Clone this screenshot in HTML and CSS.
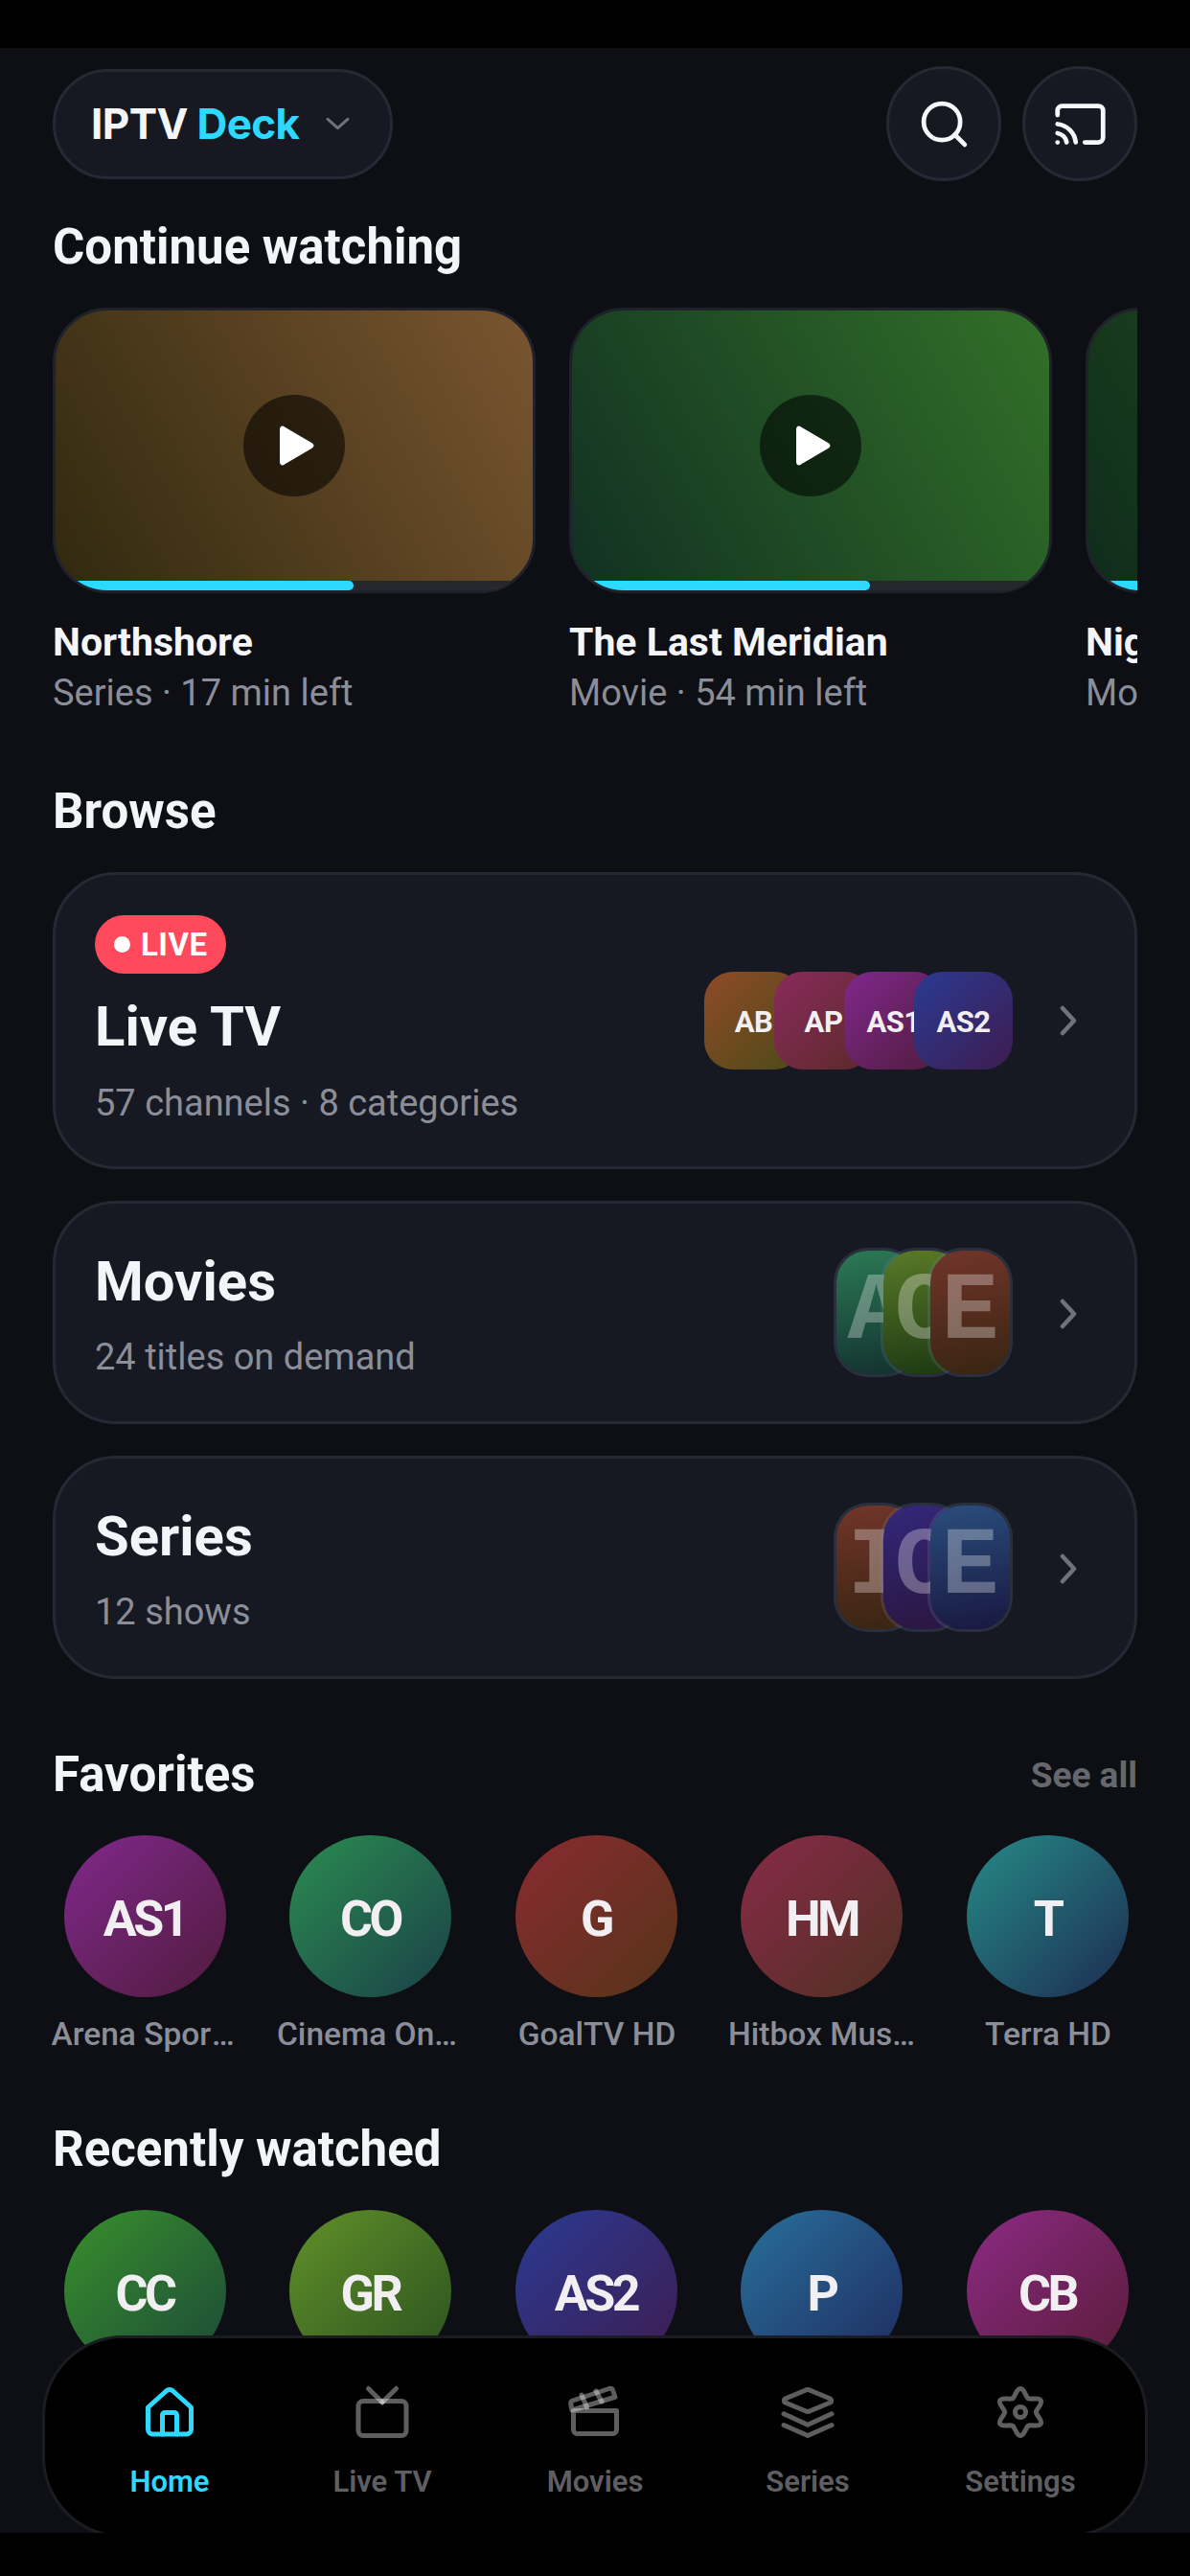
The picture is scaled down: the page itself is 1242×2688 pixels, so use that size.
FILE: index.html
```html
<!DOCTYPE html>
<html lang="en">
<head>
<meta charset="utf-8">
<title>IPTV Deck</title>
<link rel="stylesheet" href="styles.css">
</head>
<body>
<div class="bar-top"></div>
<div class="app">
  <header class="header">
    <button class="brand"><span class="brand-name">IPTV <em>Deck</em></span>
      <svg class="brand-caret" viewBox="0 0 24 13"><path d="M2 2l10 9 10-9"/></svg>
    </button>
    <div class="header-actions">
      <button class="round-btn"><svg class="ico-white" viewBox="0 0 24 24"><circle cx="11" cy="11" r="8"/><path d="M21 21l-4.35-4.35"/></svg></button>
      <button class="round-btn"><svg class="ico-white" viewBox="0 0 24 24"><path d="M2 8V6a2 2 0 0 1 2-2h16a2 2 0 0 1 2 2v12a2 2 0 0 1-2 2h-6"/><path d="M2 12a9 9 0 0 1 8 8"/><path d="M2 16a5 5 0 0 1 4 4"/><path d="M2 20h.01"/></svg></button>
    </div>
  </header>

  <h2 class="heading heading-continue">Continue watching</h2>
  <div class="continue-row">
    <article class="cw">
      <div class="cw-thumb thumb-north">
        <span class="play"><svg viewBox="0 0 37 42"><path d="M1 4v34c0 3 2.600 4.500 5 2.600L35 23.400c2-1.500 2-3.300 0-4.800L6 1.400C3.600-.5 1 1 1 4z"/></svg></span>
        <span class="track"><span class="track-fill"></span></span>
      </div>
      <div class="cw-title">Northshore</div>
      <div class="cw-sub">Series · 17 min left</div>
    </article>
    <article class="cw">
      <div class="cw-thumb thumb-meridian">
        <span class="play"><svg viewBox="0 0 37 42"><path d="M1 4v34c0 3 2.600 4.500 5 2.600L35 23.400c2-1.500 2-3.300 0-4.800L6 1.400C3.600-.5 1 1 1 4z"/></svg></span>
        <span class="track"><span class="track-fill"></span></span>
      </div>
      <div class="cw-title">The Last Meridian</div>
      <div class="cw-sub">Movie · 54 min left</div>
    </article>
    <article class="cw">
      <div class="cw-thumb thumb-night">
        <span class="play"><svg viewBox="0 0 37 42"><path d="M1 4v34c0 3 2.600 4.500 5 2.600L35 23.400c2-1.500 2-3.300 0-4.800L6 1.400C3.600-.5 1 1 1 4z"/></svg></span>
        <span class="track"><span class="track-fill"></span></span>
      </div>
      <div class="cw-title">Night Harbor</div>
      <div class="cw-sub">Movie · 31 min left</div>
    </article>
  </div>

  <h2 class="heading heading-browse">Browse</h2>
  <div class="browse">
    <a class="browse-card browse-live">
      <div class="browse-text">
        <span class="live-badge"><i class="live-dot"></i>LIVE</span>
        <div class="browse-title">Live TV</div>
        <div class="browse-sub">57 channels · 8 categories</div>
      </div>
      <div class="tiles">
        <span class="tile g-ab">AB</span>
        <span class="tile g-ap">AP</span>
        <span class="tile g-as1">AS1</span>
        <span class="tile g-as2">AS2</span>
      </div>
      <svg class="chev" viewBox="0 0 18 32"><path d="M3 3l12 13L3 29"/></svg>
    </a>
    <a class="browse-card">
      <div class="browse-text">
        <div class="browse-title">Movies</div>
        <div class="browse-sub">24 titles on demand</div>
      </div>
      <div class="posters">
        <span class="poster p-green">A</span>
        <span class="poster p-olive">C</span>
        <span class="poster p-rust">E</span>
      </div>
      <svg class="chev" viewBox="0 0 18 32"><path d="M3 3l12 13L3 29"/></svg>
    </a>
    <a class="browse-card">
      <div class="browse-text">
        <div class="browse-title">Series</div>
        <div class="browse-sub">12 shows</div>
      </div>
      <div class="posters">
        <span class="poster p-rust">I</span>
        <span class="poster p-indigo">C</span>
        <span class="poster p-navy">E</span>
      </div>
      <svg class="chev" viewBox="0 0 18 32"><path d="M3 3l12 13L3 29"/></svg>
    </a>
  </div>

  <div class="heading-row">
    <h2 class="heading">Favorites</h2>
    <span class="see-all">See all</span>
  </div>
  <div class="channels">
    <div class="channel"><span class="disc g-as1">AS1</span><span class="channel-name">Arena Sports 1</span></div>
    <div class="channel"><span class="disc g-co">CO</span><span class="channel-name">Cinema One HD</span></div>
    <div class="channel"><span class="disc g-g">G</span><span class="channel-name">GoalTV HD</span></div>
    <div class="channel"><span class="disc g-hm">HM</span><span class="channel-name">Hitbox Music HD</span></div>
    <div class="channel"><span class="disc g-t">T</span><span class="channel-name">Terra HD</span></div>
  </div>

  <h2 class="heading heading-recent">Recently watched</h2>
  <div class="channels">
    <div class="channel"><span class="disc g-cc">CC</span></div>
    <div class="channel"><span class="disc g-gr">GR</span></div>
    <div class="channel"><span class="disc g-as2">AS2</span></div>
    <div class="channel"><span class="disc g-p">P</span></div>
    <div class="channel"><span class="disc g-cb">CB</span></div>
  </div>

  <nav class="tabbar">
    <a class="tab tab-active">
      <svg class="tab-ico" viewBox="0 0 24 24"><path d="M3 10.800L10.700 3.900a2 2 0 0 1 2.600 0L21 10.800V20a2 2 0 0 1-2 2H5a2 2 0 0 1-2-2z"/><path d="M9 22v-8a1 1 0 0 1 1-1h4a1 1 0 0 1 1 1v8"/></svg>
      <span>Home</span>
    </a>
    <a class="tab">
      <svg class="tab-ico" viewBox="0 0 24 24"><rect x="2" y="8.200" width="20" height="14.400" rx="2"/><path d="M6.200 3L12 8.700"/><path d="M17.800 3L12 8.700"/></svg>
      <span>Live TV</span>
    </a>
    <a class="tab">
      <svg class="tab-ico" viewBox="0 0 24 24"><path d="M3 12.200h18v8a1.600 1.600 0 0 1-1.600 1.600H4.600A1.600 1.600 0 0 1 3 20.200z"/><path d="M2.400 12L1.900 9.200a1 1 0 0 1 .8-1.200L18.200 2.900a1 1 0 0 1 1.200.7l1 2.900z"/><path d="M6.400 5.600l2.200 5.200"/><path d="M12.400 4l2.400 4.400"/></svg>
      <span>Movies</span>
    </a>
    <a class="tab">
      <svg class="tab-ico" viewBox="0 0 24 24"><path d="M11 3.700a2 2 0 0 1 2 0l8.400 3.500a.9.9 0 0 1 0 1.600L13 12.300a2 2 0 0 1-2 0L2.600 8.800a.9.900 0 0 1 0-1.600z"/><path d="M2 13.500l10 4.600 10-4.600"/><path d="M2 18.200l10 4.400 10-4.400"/></svg>
      <span>Series</span>
    </a>
    <a class="tab">
      <svg class="tab-ico tab-ico-solid" viewBox="0 0 24 24">
        <defs><path id="gear-lobe" d="M8.700 7.080C9.900 6.400 10.200 3 12 3s2.100 3.400 3.300 4.080"/></defs>
        <use href="#gear-lobe"/>
        <use href="#gear-lobe" transform="rotate(60 12 12.800)"/>
        <use href="#gear-lobe" transform="rotate(120 12 12.800)"/>
        <use href="#gear-lobe" transform="rotate(180 12 12.800)"/>
        <use href="#gear-lobe" transform="rotate(240 12 12.800)"/>
        <use href="#gear-lobe" transform="rotate(300 12 12.800)"/>
        <circle cx="12" cy="12.800" r="2.200"/>
      </svg>
      <span>Settings</span>
    </a>
  </nav>
</div>
<div class="bar-bottom"></div>
</body>
</html>
```
FILE: styles.css
```css
* { box-sizing: border-box; }
html, body { margin: 0; padding: 0; background: #000; }
body {
  width: 1242px;
  height: 2688px;
  display: flex;
  flex-direction: column;
  overflow: hidden;
  font-family: Roboto, "Liberation Sans", sans-serif;
  color: #f4f5f9;
}
.bar-top { height: 50px; flex: none; background: #000; }
.bar-bottom { height: 45px; flex: none; background: #000; }
.app {
  position: relative;
  flex: 1;
  min-height: 0;
  overflow: hidden;
  background: #0d0f14;
  padding: 19px 55px 0;
}
button { font: inherit; color: inherit; padding: 0; }

.header { display: flex; align-items: center; justify-content: space-between; height: 120px; }
.brand {
  width: 355px;
  height: 115px;
  border-radius: 58px;
  background: #161922;
  border: 3px solid #262933;
  display: flex;
  align-items: center;
  gap: 27px;
  padding-left: 37px;
}
.brand-name { font-family: Inter, Roboto, sans-serif; font-weight: 700; font-size: 44px; letter-spacing: -.6px; line-height: 1; }
.brand-name em { font-style: normal; color: #2dd9ff; }
.brand-caret { width: 25px; height: 14px; fill: none; stroke: #6f717a; stroke-width: 3; stroke-linecap: round; stroke-linejoin: round; }
.header-actions { display: flex; gap: 22px; }
.round-btn {
  width: 120px;
  height: 120px;
  border-radius: 50%;
  background: #161922;
  border: 3px solid #262933;
  display: flex;
  align-items: center;
  justify-content: center;
}
.ico-white { width: 57px; height: 57px; fill: none; stroke: #f7f8fb; stroke-width: 2; stroke-linecap: round; stroke-linejoin: round; }

.heading { margin: 0; font-size: 51px; font-weight: 700; line-height: 60px; color: #f4f5f9; }
.heading-continue { margin-top: 39px; }
.continue-row { display: flex; gap: 35px; margin-top: 33px; overflow: hidden; }
.cw { flex: none; width: 504px; }
.cw-thumb {
  position: relative;
  height: 298px;
  border-radius: 57px;
  border: 3px solid #20222b;
  overflow: hidden;
  display: flex;
  align-items: center;
  justify-content: center;
}
.thumb-north { background: linear-gradient(60deg, #30290f, #7a5530); }
.thumb-meridian { background: linear-gradient(60deg, #113022, #327028); }
.thumb-night { background: linear-gradient(60deg, #0f2c1c, #2f5a1e); }
.play {
  width: 106px;
  height: 106px;
  border-radius: 50%;
  background: rgba(0, 0, 0, .55);
  display: flex;
  align-items: center;
  justify-content: center;
  margin-bottom: 10px;
}
.play svg { width: 37px; height: 42px; fill: #fff; margin-left: 4px; }
.track { position: absolute; left: 0; right: 0; bottom: 0; height: 10px; background: #26272c; }
.track-fill { display: block; width: 62.500%; height: 100%; background: #2dd9ff; border-radius: 0 5px 5px 0; }
.cw-title { margin-top: 27px; font-size: 41px; font-weight: 700; line-height: 48px; white-space: nowrap; }
.cw-sub { margin-top: 4px; font-size: 38px; line-height: 50px; color: #8b8e99; white-space: nowrap; }

.heading-browse { margin-top: 69px; }
.browse { display: flex; flex-direction: column; gap: 33px; margin-top: 33px; }
.browse-card {
  display: flex;
  align-items: center;
  padding: 45px 60px 43px 41px;
  background: #161922;
  border: 3px solid #262933;
  border-radius: 66px;
}
.browse-live { padding-top: 42px; padding-bottom: 42px; }
.browse-text { flex: 1; min-width: 0; }
.live-badge {
  display: inline-flex;
  align-items: center;
  gap: 11px;
  height: 61px;
  padding: 0 19px 0 20px;
  border-radius: 31px;
  background: #ff4a5e;
  color: #fff;
  font-size: 33px;
  font-weight: 700;
  letter-spacing: .5px;
  vertical-align: top;
}
.live-dot { width: 17px; height: 17px; border-radius: 50%; background: #fff; }
.browse-title { font-size: 58px; font-weight: 700; line-height: 72px; }
.live-badge + .browse-title { margin-top: 19px; }
.browse-sub { margin-top: 19px; font-size: 38px; line-height: 48px; color: #8b8e99; }
.browse-live .browse-sub { margin-top: 20px; }

.tiles { display: flex; margin-right: 49px; }
.tile {
  flex: none;
  width: 103px;
  height: 102px;
  border-radius: 30px;
  display: flex;
  align-items: center;
  justify-content: center;
  padding-top: 3px;
  font-size: 31px;
  font-weight: 700;
  letter-spacing: -.5px;
  color: #f1eff2;
}
.tile + .tile { margin-left: -30px; }

.posters { display: flex; margin-right: 49px; margin-top: -2px; }
.poster {
  flex: none;
  width: 89px;
  height: 135px;
  border-radius: 36px;
  border: 3px solid rgba(125, 135, 170, .2);
  background-clip: padding-box;
  display: flex;
  align-items: center;
  justify-content: center;
  overflow: hidden;
  font-family: "Liberation Mono", monospace;
  font-size: 100px;
  font-weight: 700;
  color: rgba(255, 255, 255, .3);
}
.poster + .poster { margin-left: -40px; }
.p-green { background-image: linear-gradient(170deg, #2b7a55, #13302f); }
.p-olive { background-image: linear-gradient(170deg, #5a7a28, #1c3812); }
.p-rust { background-image: linear-gradient(170deg, #71352a, #382412); }
.p-indigo { background-image: linear-gradient(170deg, #33277a, #2a1640); }
.p-navy { background-image: linear-gradient(170deg, #2a4d7c, #181840); }

.chev { flex: none; width: 18px; height: 32px; fill: none; stroke: #6f727c; stroke-width: 4.500; stroke-linecap: round; stroke-linejoin: round; }

.heading-row { display: flex; align-items: center; justify-content: space-between; margin-top: 70px; }
.see-all { font-size: 37px; font-weight: 700; color: #66676d; }
.channels { display: flex; gap: 41.500px; margin-top: 33px; }
.channel { flex: none; width: 194px; display: flex; flex-direction: column; align-items: center; }
.disc {
  width: 169px;
  height: 169px;
  margin-right: 2px;
  border-radius: 50%;
  display: flex;
  align-items: center;
  justify-content: center;
  padding-top: 6px;
  font-size: 52px;
  font-weight: 700;
  letter-spacing: -3.500px;
  color: #f1eff2;
}
.channel-name {
  flex: none;
  width: 197px;
  margin-top: 16px;
  font-size: 33.500px;
  font-weight: 500;
  line-height: 46px;
  color: #8b8e99;
  text-align: center;
  white-space: nowrap;
  overflow: hidden;
  text-overflow: ellipsis;
}
.heading-recent { margin-top: 67px; }

.g-ab { background: linear-gradient(135deg, #8f4a28, #4c4a18); }
.g-ap { background: linear-gradient(135deg, #8a2a5c, #5a2a28); }
.g-as1 { background: linear-gradient(135deg, #80288c, #501c3c); }
.g-as2 { background: linear-gradient(135deg, #2a3a92, #3e1c50); }
.g-co { background: linear-gradient(135deg, #2a8c50, #1b4048); }
.g-g { background: linear-gradient(135deg, #8a2a32, #553418); }
.g-hm { background: linear-gradient(135deg, #882a48, #503022); }
.g-t { background: linear-gradient(135deg, #268a88, #1c2c50); }
.g-cc { background: linear-gradient(135deg, #38902c, #1c4838); }
.g-gr { background: linear-gradient(135deg, #609028, #2a5020); }
.g-p { background: linear-gradient(135deg, #28709a, #1f2a60); }
.g-cb { background: linear-gradient(135deg, #8c2a84, #581c38); }

.tabbar {
  position: absolute;
  left: 44px;
  right: 44px;
  bottom: -5px;
  height: 211px;
  display: flex;
  padding: 45px 19px 0;
  background: #000;
  border: 3px solid #1b1c21;
  border-radius: 84px;
}
.tab {
  flex: 1;
  display: flex;
  flex-direction: column;
  align-items: center;
  gap: 24px;
  font-size: 31px;
  font-weight: 600;
  line-height: 42px;
  color: #5f5f62;
}
.tab-ico { width: 60px; height: 60px; fill: none; stroke: rgba(255, 255, 255, .37); stroke-width: 2; stroke-linecap: round; stroke-linejoin: round; }
.tab-ico-solid { stroke: #5f5f62; }
.tab-active { color: #2dd9ff; }
.tab-active .tab-ico { stroke: #2dd9ff; }
```
